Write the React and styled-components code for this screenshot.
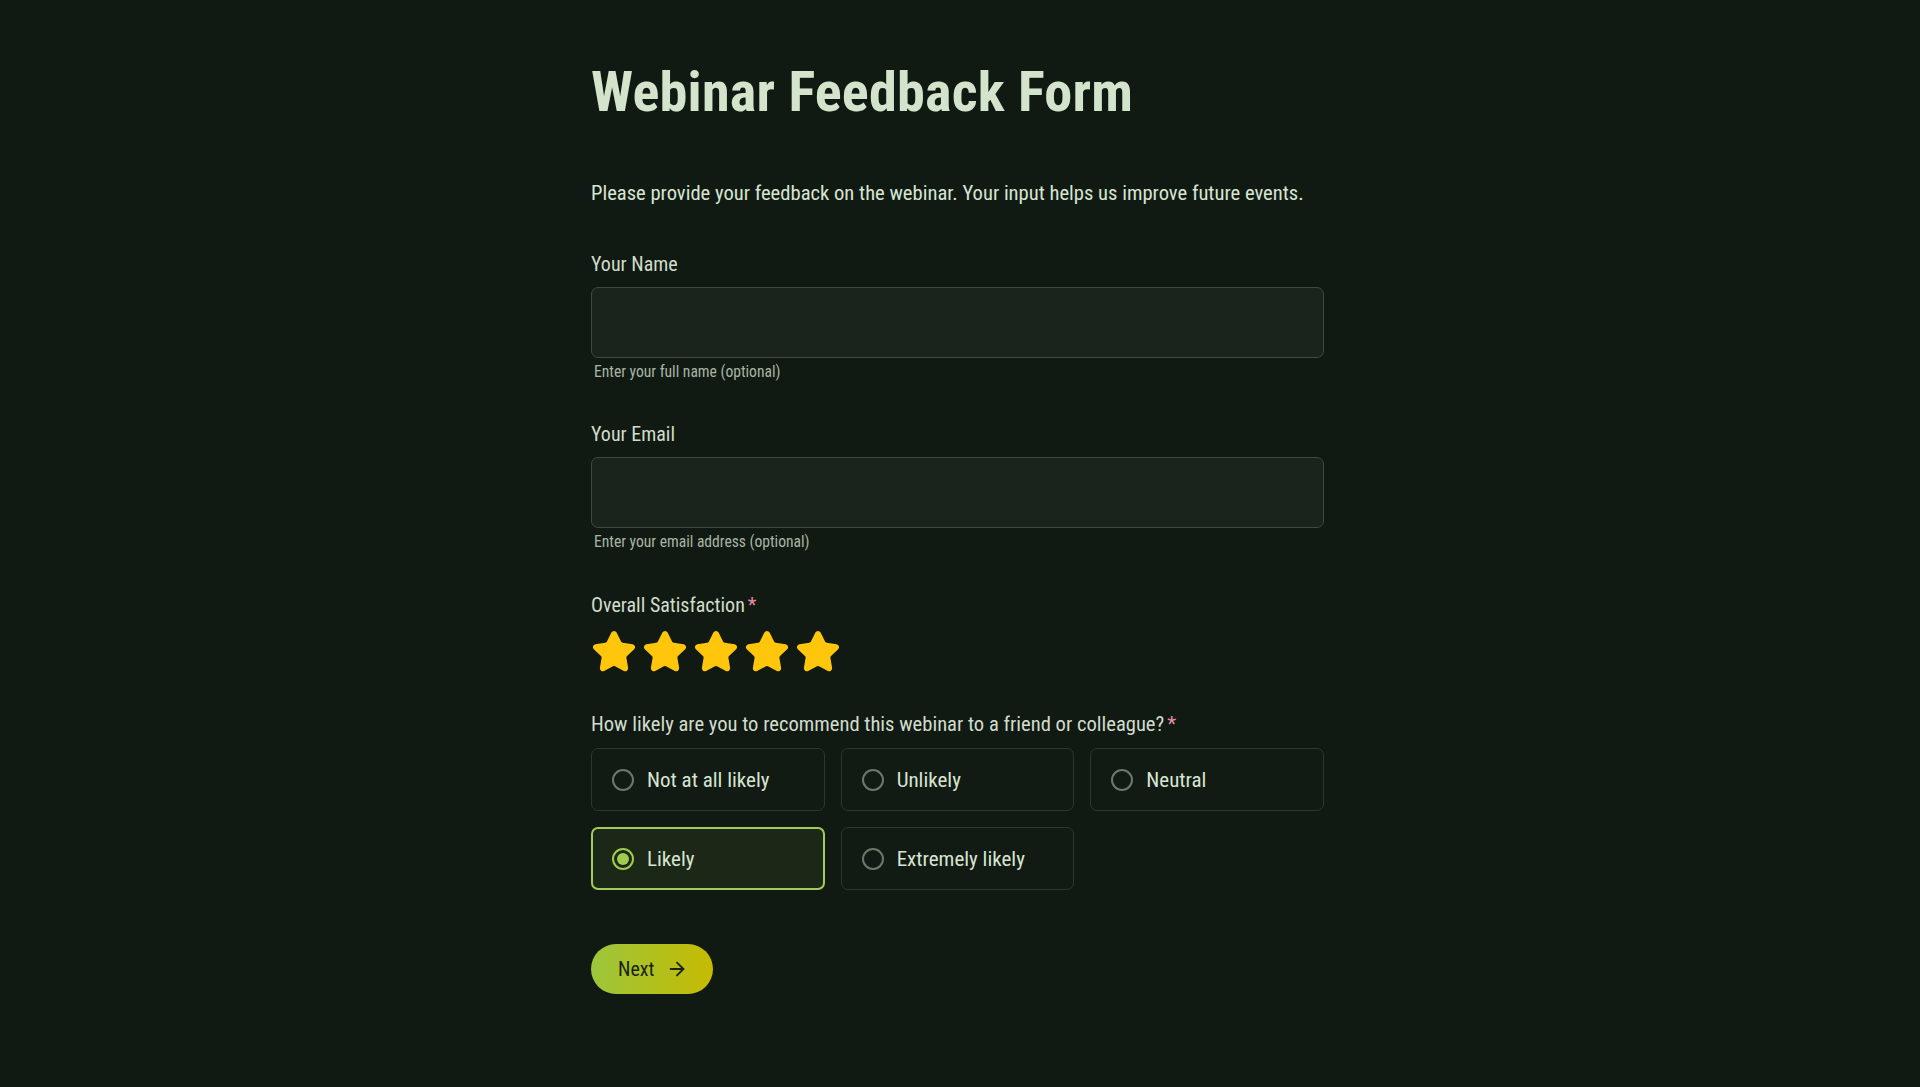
import React, { useState } from "react";
import styled, { createGlobalStyle } from "styled-components";
import { Star, ArrowRight } from "lucide-react";

const FONT = `"Roboto Condensed", "Roboto", "Liberation Sans", sans-serif`;

const GlobalStyle = createGlobalStyle`
  html, body { margin: 0; padding: 0; background: #101a12; }
  body { font-family: ${FONT}; color: #d8e4d2; }
  * { box-sizing: border-box; }
`;

const Page = styled.div`
  min-height: 1087px;
  background: #101a12;
  display: flex;
  justify-content: center;
  padding: 58px 5px 0 0;
`;

const Container = styled.main`
  width: 733px;
  display: flex;
  flex-direction: column;
`;

const Title = styled.h1`
  margin: 0;
  font-family: ${FONT};
  font-size: 56.2px;
  line-height: 68px;
  font-weight: 700;
  color: #d4e4cc;
  letter-spacing: 0.2px;
`;

const Description = styled.p`
  margin: 52px 0 0;
  font-size: 20.6px;
  line-height: 30px;
  color: #d8e4d2;
`;

const Field = styled.div`
  display: flex;
  flex-direction: column;
  margin-top: ${(p) => p.$mt}px;
`;

const Label = styled.label`
  font-size: ${(p) => p.$size ?? 20}px;
  line-height: 28px;
  color: #d2dccd;
  margin-bottom: ${(p) => p.$mb ?? 9}px;
`;

const Required = styled.span`
  color: #e58aa6;
  margin-left: 3px;
`;

const Input = styled.input`
  height: 71px;
  width: 100%;
  background: #1b241c;
  border: 1.5px solid #3d4a3d;
  border-radius: 7px;
  color: #d8e4d2;
  font-family: ${FONT};
  font-size: 20px;
  padding: 0 16px;
  outline: none;
`;

const Helper = styled.span`
  margin-top: 4px;
  padding-left: 3px;
  font-size: 15.6px;
  line-height: 21px;
  color: #a9b5a5;
`;

const Stars = styled.div`
  display: flex;
  gap: 5px;
`;

const StarButton = styled.button`
  background: none;
  border: 0;
  padding: 0;
  display: flex;
  cursor: pointer;
`;

const Options = styled.div`
  display: grid;
  grid-template-columns: repeat(3, 1fr);
  gap: 16px;
`;

const Option = styled.label`
  height: 63px;
  display: flex;
  align-items: center;
  gap: 13px;
  padding: 0 ${(p) => (p.$selected ? 19 : 20)}px;
  border: ${(p) => (p.$selected ? "2px solid #a2cc55" : "1.5px solid #2c372d")};
  border-radius: 7px;
  background: ${(p) => (p.$selected ? "#1b2817" : "#111b13")};
  cursor: pointer;
  font-size: 21px;
  color: #d8e4d2;
`;

const Radio = styled.span`
  width: 22px;
  height: 22px;
  border-radius: 50%;
  border: 2px solid ${(p) => (p.$selected ? "#9fcb4e" : "#6d786b")};
  display: flex;
  align-items: center;
  justify-content: center;
  flex-shrink: 0;
  &::after {
    content: "";
    width: 12px;
    height: 12px;
    border-radius: 50%;
    background: ${(p) => (p.$selected ? "#9fcb4e" : "transparent")};
  }
`;

const Actions = styled.div`
  margin-top: 54px;
  display: flex;
`;

const NextButton = styled.button`
  height: 50px;
  padding: 0 25px 0 27px;
  border: 0;
  border-radius: 25px;
  background: linear-gradient(90deg, #9cc63c 0%, #c6bb02 100%);
  color: #1a2410;
  font-family: ${FONT};
  font-size: 20px;
  font-weight: 400;
  display: flex;
  align-items: center;
  gap: 12px;
  cursor: pointer;
`;

const options = ["Not at all likely", "Unlikely", "Neutral", "Likely", "Extremely likely"];

export default function App() {
  const [rating, setRating] = useState(5);
  const [choice, setChoice] = useState("Likely");
  return (
    <>
      <GlobalStyle />
      <Page>
        <Container>
          <Title>Webinar Feedback Form</Title>
          <Description>
            Please provide your feedback on the webinar. Your input helps us improve future events.
          </Description>

          <Field $mt={42}>
            <Label>Your Name</Label>
            <Input type="text" />
            <Helper>Enter your full name (optional)</Helper>
          </Field>

          <Field $mt={37}>
            <Label>Your Email</Label>
            <Input type="email" />
            <Helper>Enter your email address (optional)</Helper>
          </Field>

          <Field $mt={38}>
            <Label $mb={10}>
              Overall Satisfaction<Required>*</Required>
            </Label>
            <Stars>
              {[1, 2, 3, 4, 5].map((n) => (
                <StarButton key={n} type="button" onClick={() => setRating(n)} aria-label={`${n} stars`}>
                  <Star
                    size={46}
                    strokeWidth={2}
                    color={n <= rating ? "#ffc60b" : "#4a554a"}
                    fill={n <= rating ? "#ffc60b" : "transparent"}
                  />
                </StarButton>
              ))}
            </Stars>
          </Field>

          <Field $mt={35}>
            <Label $mb={10} $size={20.6}>
              How likely are you to recommend this webinar to a friend or colleague?<Required>*</Required>
            </Label>
            <Options>
              {options.map((o) => (
                <Option key={o} $selected={choice === o} onClick={() => setChoice(o)}>
                  <Radio $selected={choice === o} />
                  {o}
                </Option>
              ))}
            </Options>
          </Field>

          <Actions>
            <NextButton type="button">
              Next
              <ArrowRight size={22} strokeWidth={2} />
            </NextButton>
          </Actions>
        </Container>
      </Page>
    </>
  );
}
